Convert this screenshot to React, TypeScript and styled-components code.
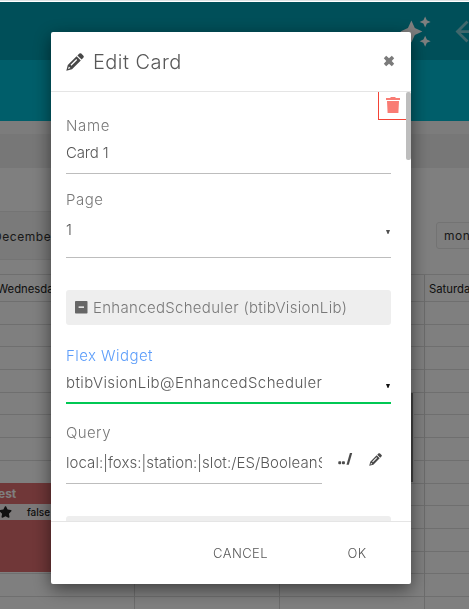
import React from "react";
import styled, { createGlobalStyle } from "styled-components";
import { MdAutoAwesome, MdArrowBack } from "react-icons/md";
import { FaStar } from "react-icons/fa";

const GlobalStyle = createGlobalStyle`
  * { box-sizing: border-box; }
  body {
    margin: 0;
    overflow: hidden;
    background: #fff;
    font-family: Inter, "Open Sans", sans-serif;
  }
`;

/* ---------- page behind the dialog ---------- */

const Page = styled.div`
  height: 609px;
  overflow: hidden;
  display: flex;
  flex-direction: column;
  border-top: 1px solid #dde2e3;
  padding-top: 1px;
`;

const TopBar = styled.header`
  height: 58px;
  flex: none;
  background: #009fb2;
  display: flex;
  align-items: center;
  justify-content: flex-end;
  gap: 18px;
  margin-right: -14px;
  color: #fff;
  svg { width: 33px; height: 33px; flex: none; }
`;

const MutedIcon = styled.span`
  display: flex;
  opacity: 0.5;
`;

const SubBar = styled.div`
  height: 61px;
  flex: none;
  background: #00bdd4;
`;

const Strip = styled.div<{ $h: number; $bg: string }>`
  height: ${(p) => p.$h}px;
  flex: none;
  background: ${(p) => p.$bg};
`;

const Toolbar = styled.div`
  height: 49px;
  flex: none;
  display: flex;
  align-items: center;
  justify-content: space-between;
  font-size: 12px;
  color: #333;
`;

const DateLabel = styled.div`
  width: 220px;
  height: 49px;
  background: #f4f4f4;
  border: solid #e9e9e9;
  border-width: 1px 0;
  line-height: 50px;
  white-space: nowrap;
  letter-spacing: 0.55px;
  span { margin-left: -7px; }
`;

const ViewButton = styled.div`
  width: 70px;
  height: 27px;
  margin-right: -37px;
  padding-left: 7px;
  line-height: 25px;
  border: 1px solid #e6e6e6;
  border-radius: 3px;
  background: #fdfdfd;
  font-size: 12px;
  letter-spacing: 0.5px;
`;

const Calendar = styled.div`
  flex: none;
  margin-top: 14px;
  width: 570px;
  display: grid;
  grid-template-columns: 135px 145px 145px 145px;
  border-top: 1px solid #dedede;
`;

const DayColumn = styled.div`
  height: 335px;
  border-right: 1px solid #d8d8d8;
  display: grid;
  grid-template-rows: 27px;
  grid-auto-rows: 22.7px;
`;

const DayName = styled.div`
  border-bottom: 1px solid #dedede;
  padding-left: 4px;
  font-size: 11.3px;
  line-height: 28px;
  color: #222;
  white-space: nowrap;
`;

const FirstDayName = styled(DayName)`
  padding-left: 0;
  text-indent: -3px;
`;

const Slot = styled.div`
  border-bottom: 1px solid #dedede;
`;

const EventBox = styled.div`
  position: absolute;
  left: 0;
  top: 483px;
  width: 132px;
  height: 89px;
  background: #e06e70;
  color: #fff;
`;

const EventTitle = styled.div`
  height: 21px;
  line-height: 22px;
  font-size: 12px;
  font-weight: 700;
  text-indent: -2px;
`;

const EventRow = styled.div`
  height: 16px;
  display: flex;
  align-items: center;
  gap: 15px;
  background: #f8f3f3;
  color: #222;
  font-size: 10px;
  font-weight: 500;
  svg { width: 13px; height: 12px; margin-left: -1px; }
`;

const EventEdge = styled.div`
  position: absolute;
  left: 285px;
  top: 393px;
  width: 129px;
  height: 89px;
  background: #868686;
  border-right: 1px solid #f8f8f8;
`;

/* ---------- dialog ---------- */

const Backdrop = styled.div`
  position: fixed;
  inset: 2px 0 0;
  background: rgba(0, 0, 0, 0.5);
  padding: 30px 0 0 51px;
`;

const Dialog = styled.section`
  width: 360px;
  height: 552px;
  display: flex;
  flex-direction: column;
  background: #fff;
  border-radius: 2px;
  box-shadow: 0 5px 18px rgba(0, 0, 0, 0.52);
  color: #585858;
  font-weight: 300;
`;

const DialogHeader = styled.div`
  height: 60px;
  flex: none;
  display: flex;
  align-items: center;
  border-bottom: 1px solid #e5e5e5;
  padding: 0 16px 0 15px;
`;

const Title = styled.h1`
  margin: 0 auto 0 9px;
  font-size: 20px;
  font-weight: 300;
  letter-spacing: 0.45px;
  line-height: 24px;
`;

const Content = styled.div`
  position: relative;
  height: 429px;
  flex: none;
  overflow: hidden;
  padding: 24px 20px 0 15px;
`;

const DeleteButton = styled.div`
  position: absolute;
  top: -1px;
  right: 5px;
  width: 28px;
  height: 29px;
  border: 1px solid #f44336;
  border-top: 0;
  border-right: 0;
  padding: 6px 0 0 7px;
  svg { display: block; }
`;

const Scrollbar = styled.div`
  position: absolute;
  top: 0;
  right: 0;
  width: 5px;
  height: 68px;
  border-radius: 2px;
  background: #bdbdbd;
`;

const Label = styled.div<{ $active?: boolean; $spacing: number }>`
  height: 20px;
  line-height: 20px;
  font-size: 15px;
  letter-spacing: ${(p) => p.$spacing}px;
  color: ${(p) => (p.$active ? "#5c9dfa" : "#787878")};
`;

const Value = styled.div<{
  $height: number;
  $line: number;
  $active?: boolean;
  $width?: number;
  $spacing?: number;
}>`
  width: ${(p) => (p.$width ? `${p.$width}px` : "auto")};
  height: ${(p) => p.$height}px;
  line-height: ${(p) => p.$line}px;
  border-bottom: ${(p) => (p.$active ? "2px solid #00c853" : "1px solid #bdbdbd")};
  display: flex;
  justify-content: space-between;
  overflow: hidden;
  white-space: nowrap;
  font-size: 15px;
  letter-spacing: ${(p) => p.$spacing ?? 0}px;
  color: #585858;
`;

const Caret = styled.svg<{ $dark?: boolean; $top: number }>`
  width: 4px;
  height: 4px;
  flex: none;
  margin: ${(p) => p.$top}px 1px 0 0;
  fill: ${(p) => (p.$dark ? "#111" : "#505050")};
`;

const Section = styled.div<{ $gap: number }>`
  height: 35px;
  margin-top: ${(p) => p.$gap}px;
  border-radius: 3px;
  background: #eee;
  display: flex;
  align-items: center;
  gap: 5px;
  padding-left: 9px;
  font-size: 15px;
  letter-spacing: 0.31px;
  white-space: nowrap;
  color: #787878;
`;

const Field = styled.div<{ $gap: number }>`
  margin-top: ${(p) => p.$gap}px;
`;

const QueryRow = styled.div`
  display: flex;
  align-items: flex-start;
`;

const PathMark = styled.span`
  display: flex;
  margin: 6px 0 0 16px;
  width: 31px;
`;

const QueryEdit = styled.span`
  display: flex;
  margin-top: 10px;
`;

const DialogFooter = styled.div`
  flex: 1;
  border-top: 1px solid #e5e5e5;
  display: flex;
  justify-content: flex-end;
  align-items: center;
  gap: 79.5px;
  padding-right: 44.500px;
  padding-bottom: 1px;
  font-size: 13px;
`;

const FooterButton = styled.span`
  letter-spacing: 0.4px;
`;

const Pencil = ({ size }: { size: number }) => (
  <svg width={size} height={size} viewBox="0 0 18 18" fill="#484848">
    <path
      fillRule="evenodd"
      d="M10.6 3.2 14.800 7.400 6 16.200.3 17.700 1.800 12zM10.300 6 4.500 11.800l.9.9 5.800-5.800zM2.900 13.500 2 16l2.500-.9z"
    />
    <path d="M11.400 2.400 13.400.5Q14.500-.2 15.300.6L17.400 2.700Q18.200 3.500 17.500 4.400L15.600 6.600z" />
  </svg>
);

const Close = styled.svg`
  width: 12px;
  height: 12px;
  margin-bottom: 2px;
  fill: #7b7b7b;
`;

const Triangle = (p: { dark?: boolean; top: number }) => (
  <Caret $dark={p.dark} $top={p.top} viewBox="0 0 4 4">
    <path d="M0 0h4L2.4 4h-.8z" />
  </Caret>
);

const Collapse = () => (
  <svg width="13" height="13" viewBox="0 0 13 13">
    <rect width="12.5" height="12.5" rx="0.8" fill="#666" />
    <rect x="3.6" y="5.4" width="5.4" height="1.5" fill="#eee" />
  </svg>
);

const Trash = () => (
  <svg width="14" height="17" viewBox="0 0 14 17" fill="#f97c74">
    <path d="M4.5 0h5v1H14v2H0V1h4.5zM1 4h12l-.6 12H1.6z" />
  </svg>
);

const slots = Array.from({ length: 14 }, (_, i) => i);
const days = ["Wednesday", "Thursday", "Friday", "Saturday"];

export default function App() {
  return (
    <>
      <GlobalStyle />
      <Page>
        <TopBar>
          <MdAutoAwesome />
          <MutedIcon><MdArrowBack /></MutedIcon>
        </TopBar>
        <SubBar />
        <Strip $h={13} $bg="#f8f8f8" />
        <Strip $h={34} $bg="#eeeeee" />
        <Strip $h={43} $bg="#ffffff" />
        <Toolbar>
          <DateLabel><span>December</span></DateLabel>
          <ViewButton>month</ViewButton>
        </Toolbar>
        <Calendar>
          {days.map((day, i) => (
            <DayColumn key={day}>
              {i === 0 ? <FirstDayName>{day}</FirstDayName> : <DayName>{day}</DayName>}
              {slots.map((s) => <Slot key={s} />)}
            </DayColumn>
          ))}
        </Calendar>
        <EventBox>
          <EventTitle>est</EventTitle>
          <EventRow><FaStar />false</EventRow>
        </EventBox>
        <EventEdge />
      </Page>

      <Backdrop>
        <Dialog>
          <DialogHeader>
            <Pencil size={18} />
            <Title>Edit Card</Title>
            <Close viewBox="0 0 12 12">
              <path d="M3.2.8 6 3.300 8.800.8 11.200 3.200 8.700 6l2.500 2.800-2.400 2.400L6 8.700l-2.800 2.500L.8 8.800 3.300 6 .8 3.200z" />
            </Close>
          </DialogHeader>

          <Content>
            <Label $spacing={0.65}>Name</Label>
            <Value $height={38} $line={34} $spacing={-0.15}>Card 1</Value>

            <Field $gap={16}>
              <Label $spacing={0.55}>Page</Label>
              <Value $height={48} $line={40}>1<Triangle top={20} /></Value>
            </Field>

            <Section $gap={32}><Collapse />EnhancedScheduler (btibVisionLib)</Section>

            <Field $gap={21}>
              <Label $active $spacing={0.44}>Flex Widget</Label>
              <Value $height={38} $line={34} $active $spacing={0.4}>
                btibVisionLib@EnhancedScheduler<Triangle dark top={18} />
              </Value>
            </Field>

            <Field $gap={19}>
              <Label $spacing={0.4}>Query</Label>
              <QueryRow>
                <Value $height={41} $line={40} $width={256} $spacing={0.06}>
                  local:|foxs:|station:|slot:/ES/BooleanSchedule
                </Value>
                <PathMark>
                  <svg width="15" height="20" viewBox="0 0 15 20" fill="#4b4b4b">
                    <rect x="0.3" y="12.3" width="2.9" height="2.9" rx="0.8" />
                    <rect x="4" y="12.3" width="2.9" height="2.9" rx="0.8" />
                    <path d="M11.9 4h2.3L10.8 15.8H8.5z" />
                  </svg>
                </PathMark>
                <QueryEdit><Pencil size={13} /></QueryEdit>
              </QueryRow>
            </Field>

            <Section $gap={32} />

            <DeleteButton><Trash /></DeleteButton>
            <Scrollbar />
          </Content>

          <DialogFooter>
            <FooterButton>CANCEL</FooterButton>
            <FooterButton>OK</FooterButton>
          </DialogFooter>
        </Dialog>
      </Backdrop>
    </>
  );
}
